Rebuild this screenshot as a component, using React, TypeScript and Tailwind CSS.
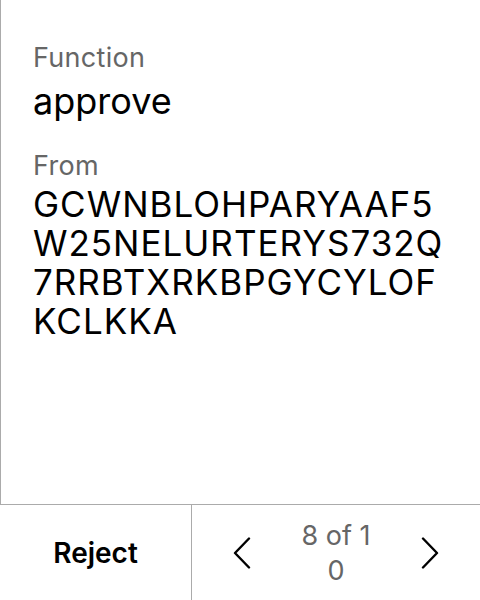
const addressLines = ["GCWNBLOHPARYAAF5", "W25NELURTERYS732Q", "7RRBTXRKBPGYCYLOF", "KCLKKA"];

function Chevron({ dir }: { dir: "left" | "right" }) {
  return (
    <svg width="18" height="32" viewBox="0 0 18 32" fill="none" stroke="black" strokeWidth="2.4" strokeLinecap="round" strokeLinejoin="round">
      {dir === "left" ? <polyline points="16,1.5 2,16 16,30.5" /> : <polyline points="2,1.5 16,16 2,30.5" />}
    </svg>
  );
}

export default function App() {
  return (
    <div className="w-[480px] h-[600px] flex flex-col bg-white font-['Inter',sans-serif] text-black">
      <div className="flex-1 border-l border-[#ababab] pl-[32px] pr-[20px] pt-[41px]">
        <p className="text-[27px] leading-[34px] tracking-[0.3px] text-[#666666]">Function</p>
        <p className="text-[36px] leading-[44px] mt-[4px]">approve</p>
        <p className="text-[27px] leading-[34px] tracking-[0.3px] text-[#666666] mt-[26px]">From</p>
        <p className="text-[35px] leading-[39px] tracking-[1px] mt-[2px]">
          {addressLines.map((line) => (
            <span key={line} className="block">{line}</span>
          ))}
        </p>
      </div>
      <div className="h-[96px] border-t border-[#ababab] flex">
        <button className="w-[192px] border-r border-[#ababab] flex items-center justify-center text-[28px] font-semibold">
          Reject
        </button>
        <div className="flex-1 flex items-center justify-center gap-[46px]">
          <Chevron dir="left" />
          <span className="w-[78px] text-center text-[27px] leading-[35px] text-[#666666] break-all">8 of 10</span>
          <Chevron dir="right" />
        </div>
      </div>
    </div>
  );
}
